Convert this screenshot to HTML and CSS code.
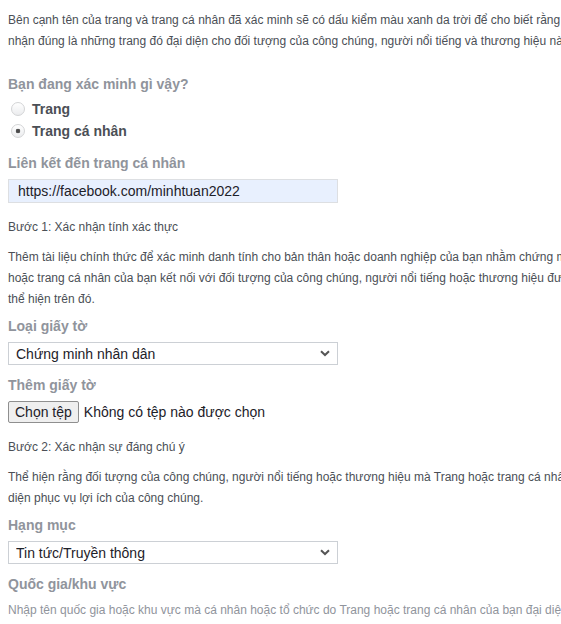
FILE: index.html
```html
<!DOCTYPE html>
<html lang="vi">
<head>
    <meta charset="UTF-8">
    <meta name="viewport" content="width=device-width, initial-scale=1.0">
    <title>Xác minh trang</title>
    <link rel="stylesheet" href="styles.css">
</head>
<body>
<div class="page">
    <!-- Intro -->
    <p class="text intro">Bên cạnh tên của trang và trang cá nhân đã xác minh sẽ có dấu kiểm màu xanh da trời để cho biết rằng chúng tôi đã xác nhận đúng là những trang đó đại diện cho đối tượng của công chúng, người nổi tiếng và thương hiệu nào.</p>

    <!-- Type -->
    <div class="field">
        <div class="label">Bạn đang xác minh gì vậy?</div>
        <div class="radios">
            <label class="radio"><input type="radio" name="kind" value="page"> Trang</label>
            <label class="radio"><input type="radio" name="kind" value="profile" checked> Trang cá nhân</label>
        </div>
    </div>

    <div class="field field-wide">
        <label class="label" for="link">Liên kết đến trang cá nhân</label>
        <input class="input" type="text" id="link" value="https://facebook.com/minhtuan2022">
    </div>

    <!-- Step 1 -->
    <div class="step">Bước 1: Xác nhận tính xác thực</div>
    <p class="text">Thêm tài liệu chính thức để xác minh danh tính cho bản thân hoặc doanh nghiệp của bạn nhằm chứng minh rằng Trang hoặc trang cá nhân của bạn kết nối với đối tượng của công chúng, người nổi tiếng hoặc thương hiệu được nhắc đến và thể hiện trên đó.</p>

    <div class="field">
        <label class="label" for="doc">Loại giấy tờ</label>
        <div class="select-wrap">
            <select class="select" id="doc">
                <option>Chứng minh nhân dân</option>
                <option>Hộ chiếu</option>
                <option>Giấy phép lái xe</option>
            </select>
            <svg class="chevron" width="10" height="7" viewBox="0 0 10 7"><path d="M1 1.2 L5 5 L9 1.2" fill="none" stroke="#555" stroke-width="2"/></svg>
        </div>
    </div>

    <div class="field field-wide">
        <div class="label">Thêm giấy tờ</div>
        <div class="file">
            <button type="button" class="file-btn">Chọn tệp</button>
            <span class="file-name">Không có tệp nào được chọn</span>
        </div>
    </div>

    <!-- Step 2 -->
    <div class="step">Bước 2: Xác nhận sự đáng chú ý</div>
    <p class="text">Thể hiện rằng đối tượng của công chúng, người nổi tiếng hoặc thương hiệu mà Trang hoặc trang cá nhân của bạn đại diện phục vụ lợi ích của công chúng.</p>

    <div class="field">
        <label class="label" for="cat">Hạng mục</label>
        <div class="select-wrap">
            <select class="select" id="cat">
                <option>Tin tức/Truyền thông</option>
                <option>Thể thao</option>
                <option>Giải trí</option>
            </select>
            <svg class="chevron" width="10" height="7" viewBox="0 0 10 7"><path d="M1 1.2 L5 5 L9 1.2" fill="none" stroke="#555" stroke-width="2"/></svg>
        </div>
    </div>

    <div class="field">
        <div class="label">Quốc gia/khu vực</div>
        <p class="text muted">Nhập tên quốc gia hoặc khu vực mà cá nhân hoặc tổ chức do Trang hoặc trang cá nhân của bạn đại diện được biết đến nhiều nhất.</p>
    </div>
</div>
</body>
</html>
```

FILE: styles.css
```css
/* General */
html {
    overflow: hidden;
}

body {
    margin: 0;
    padding: 10px 8px 0;
    font-family: "Liberation Sans", Arial, sans-serif;
    color: #4b4f56;
    background: #fff;
}

.page {
    width: 650px;
    display: flex;
    flex-direction: column;
}

/* Text blocks */
.text {
    margin: 0 0 7px;
    font-size: 12px;
    line-height: 21px;
}

.intro {
    margin-bottom: 23px;
}

.muted {
    color: #90949c;
}

.step {
    font-size: 12px;
    line-height: 18px;
    margin-bottom: 11px;
}

/* Fields */
.field {
    display: flex;
    flex-direction: column;
    align-items: flex-start;
    margin-bottom: 11px;
}

.field-wide {
    margin-bottom: 15px;
}

.label {
    font-size: 14px;
    font-weight: bold;
    line-height: 18px;
    color: #90949c;
    margin-bottom: 7px;
}

.radios {
    display: flex;
    flex-direction: column;
    margin: -2px 0 1px;
}

.radio {
    display: flex;
    align-items: center;
    gap: 7px;
    height: 22px;
    font-size: 14px;
    font-weight: bold;
    color: #4b4f56;
    padding-left: 3px;
}

.radio input {
    appearance: none;
    margin: 0;
    width: 14px;
    height: 14px;
    border-radius: 50%;
    border: 1px solid #d3d4d6;
    background: linear-gradient(#ffffff, #ebecee);
    box-sizing: border-box;
}

.radio input:checked {
    background: radial-gradient(circle, #444 0, #555 2px, transparent 2.6px), linear-gradient(#ffffff, #ebecee);
}

/* Inputs */
.input {
    width: 330px;
    height: 24px;
    box-sizing: border-box;
    border: 1px solid #dddfe2;
    background: #e8f0fe;
    padding: 0 9px;
    font-family: inherit;
    font-size: 14px;
    color: #1d2129;
}

.select-wrap {
    position: relative;
}

.select {
    appearance: none;
    width: 330px;
    height: 23px;
    box-sizing: border-box;
    border: 1px solid #ccd0d5;
    border-radius: 0;
    background: #fff;
    padding: 0 7px;
    font-family: inherit;
    font-size: 14px;
    color: #1d2129;
}

.chevron {
    position: absolute;
    right: 8px;
    top: 8px;
    pointer-events: none;
}

/* File picker */
.file {
    display: flex;
    align-items: center;
    gap: 5px;
}

.file-btn {
    height: 22px;
    padding: 0 6px;
    border: 1px solid #8f8f8f;
    border-radius: 2px;
    background: #efefef;
    font-family: inherit;
    font-size: 14px;
    color: #1d2129;
}

.file-name {
    font-size: 14px;
    color: #1d2129;
}
```
